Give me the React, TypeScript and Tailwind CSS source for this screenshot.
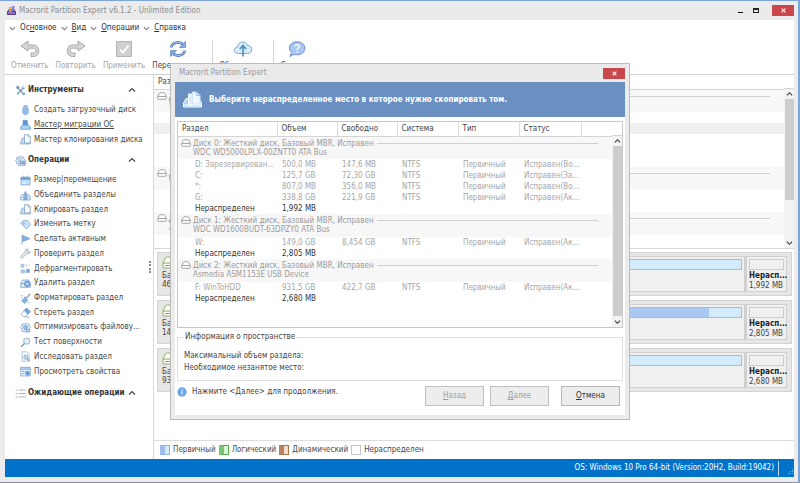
import { ReactNode } from "react";

type Volume = { name: string; size: string; free: string; fs: string; type: string; status: string };
type Disk = { title: string; model: string; capacity: string; volumes: Volume[]; unallocated: string; used: number };

const disks: Disk[] = [
  {
    title: "Диск 0: Жесткий диск, Базовый MBR, Исправен",
    model: "WDC WD5000LPLX-00ZNTT0 ATA Bus",
    capacity: "465,8 GB",
    volumes: [
      { name: "D: Зарезервирован...", size: "500,0 MB", free: "147,6 MB", fs: "NTFS", type: "Первичный", status: "Исправен(Во..." },
      { name: "C:", size: "125,7 GB", free: "72,30 GB", fs: "NTFS", type: "Первичный", status: "Исправен(За..." },
      { name: "*:", size: "807,0 MB", free: "356,0 MB", fs: "NTFS", type: "Первичный", status: "Исправен(Во..." },
      { name: "G:", size: "338,8 GB", free: "221,9 GB", fs: "NTFS", type: "Первичный", status: "Исправен(Ак..." },
    ],
    unallocated: "1,992 MB",
    used: 0,
  },
  {
    title: "Диск 1: Жесткий диск, Базовый MBR, Исправен",
    model: "WDC WD1600BUDT-63DPZY0 ATA Bus",
    capacity: "149,0 GB",
    volumes: [{ name: "W:", size: "149,0 GB", free: "8,454 GB", fs: "NTFS", type: "Первичный", status: "Исправен(Ак..." }],
    unallocated: "2,805 MB",
    used: 94,
  },
  {
    title: "Диск 2: Жесткий диск, Базовый MBR, Исправен",
    model: "Asmedia ASM1153E USB Device",
    capacity: "931,5 GB",
    volumes: [{ name: "F: WinToHDD", size: "931,5 GB", free: "422,7 GB", fs: "NTFS", type: "Первичный", status: "Исправен(Ак..." }],
    unallocated: "2,680 MB",
    used: 55,
  },
];

const columns = ["Раздел", "Объем", "Свободно", "Система", "Тип", "Статус"];

// Sidebar glyphs, all on a 16x16 grid
const glyphs: Record<string, ReactNode> = {
  tools: (
    <>
      <path d="M3 13.5 12.5 4" strokeWidth="2.2" stroke="#6fa6dc" />
      <path d="m4 4 9 9.5" strokeWidth="2" stroke="#8a97a8" />
      <path d="M1.5 3.5 4 1.2l2.3 2.6L3.8 6z" fill="#8a97a8" />
      <path d="M14.8 3.4a3 3 0 0 1-4 1.8M12.5 1a3 3 0 0 0-1.9 4" />
      <path d="m11.5 14.5 3-2.6" strokeWidth="2.4" stroke="#6fa6dc" />
    </>
  ),
  gear: (
    <>
      <path d="M8 1.5 9.5 3h2.8l.5 2.6L15 7.5V15H5v-2l-3-.6.2-2.6L.8 8l1.6-2L2.6 3.2h2.8z" fill="#dcecfa" />
      <path d="M5 9h9M5 12h9M8 7v7" />
      <circle cx="7" cy="7" r="2" fill="#fff" />
      <path d="M10 10h4v3h-4z" fill="#76b2ec" />
    </>
  ),
  usb: (
    <>
      <path d="M5.5 1h5v4h-5z" fill="#a9c8ec" />
      <path d="M4 5h8v5.5c0 2-1.5 3.5-4 3.5s-4-1.5-4-3.5z" fill="#8fbdf0" stroke="#91aede" />
      <path d="M8 14v1.5" />
    </>
  ),
  migrate: (
    <>
      <path d="M4.5 2h6v7h-6z" fill="#5f96d2" stroke="#5f96d2" />
      <path d="M11 4v5" />
      <path d="M.8 12.5 3 9h10l2.2 3.5V15H.8z" fill="#a5d2f7" stroke="#6f9dcb" />
    </>
  ),
  clone: (
    <>
      <path d="m1 12 2-6h4v6h8v2.500H1z" fill="#bfe0fa" />
      <path d="M6.500 1h5.500l3 3v9H6.500z" fill="#f4faff" />
      <path d="M12 1v3h3" />
    </>
  ),
  resize: (
    <>
      <path d="M1.5 3.5h13v11h-13z" fill="#bfe0fa" />
      <path d="M1.5 3.5h13v3h-13z" fill="#6fa8df" />
      <path d="m4 1 2.5 2L4 5M12 1 9.5 3 12 5" />
      <path d="M3 12h6" stroke="#fff" />
    </>
  ),
  merge: (
    <>
      <path d="m1 9 2-2h10l2 2v5.5H1z" fill="#dceefb" />
      <path d="M6 14V6l2-4 2 4v8z" fill="#7fb4e8" />
      <path d="M3 11h3M10 11h3" />
    </>
  ),
  label: (
    <>
      <path d="M1 6 5 2h5.500L15.500 8l-6 6.500z" fill="#c5e4fc" />
      <circle cx="5.2" cy="6" r="1.1" fill="#fff" />
    </>
  ),
  flag: (
    <>
      <path d="M3 1v14.5" stroke="#7f8fa3" />
      <path d="m4 2 10.5 4.8L4 11z" fill="#7cb3ec" />
    </>
  ),
  wrench: <path d="M14.5 4.5 12 6.5 9.8 4.5 12 1.8C9 .8 6.800 3.200 7.500 6L1.500 12c-1.300 1.700.8 3.500 2.200 2.200L9.800 8.300c3 1 5.600-1.200 4.700-3.800z" fill="#e9f1f9" stroke="#8798ad" />,
  defrag: (
    <>
      <path d="M1.500 2h4v4h-4zM1.500 10h5v4.500h-5z" fill="#a5cdf3" stroke="#9fb8d3" />
      <path d="M9 9h5v5H9z" fill="#6fa8df" stroke="#9fb8d3" />
      <path d="M8 5.500 14 2M8 2h2" strokeDasharray="1.5 1.5" />
    </>
  ),
  remove: (
    <>
      <path d="m1 9 2.500-6h9.500l2.200 6v4.500H1z" fill="#dceefb" />
      <path d="M1 8h8" />
      <circle cx="10.5" cy="8.5" r="4.3" fill="#6ea8ea" />
      <path d="M8.500 8.500h4" stroke="#fff" strokeWidth="1.5" />
    </>
  ),
  format: (
    <>
      <path d="M15 1 9.500 7" strokeWidth="1.8" stroke="#8898ac" />
      <path d="m7 5.500 4 4c-.5 3-2.500 5-5 5.500L2 11c2-.5 4-2.500 5-5.500z" fill="#80b6ee" />
      <path d="M1 4h3M2 7h2M11.500 14h2.500" />
    </>
  ),
  erase: (
    <>
      <path d="M9.500 1.500 15 7l-7 7H5L1.500 10.500z" fill="#fff" />
      <path d="M9.500 1.500 15 7l-3.500 3.500L6 5z" fill="#6ea8ea" />
      <path d="M8 14.500h6" />
    </>
  ),
  optimize: (
    <>
      <path d="M8 1.500 9.500 3h3.500l.5 3 1.500 2-1.500 2-.5 3.500H9.500L8 15l-2-1.500H3L2.500 10 1 8l1.500-2L3 3h3.500z" fill="#e6f1fb" />
      <circle cx="8" cy="8" r="3" fill="#8bc0f2" />
      <path d="M9 11h5.500v3.500H9z" fill="#b8dcfa" />
    </>
  ),
  search: (
    <>
      <circle cx="9.8" cy="6" r="4.5" fill="#e2f1fd" />
      <path d="M6.500 9.500 1.500 14.500" strokeWidth="2" />
    </>
  ),
  explore: (
    <>
      <path d="M3 1h7l3.500 3.500V15H3z" fill="#f3f7fb" stroke="#aab7c6" />
      <circle cx="8.5" cy="9" r="3" fill="#b8dcfa" />
      <path d="m10.500 11.300 3.500 3.500" strokeWidth="1.8" stroke="#6fa6dc" />
    </>
  ),
  props: (
    <>
      <path d="M1 2h14v12.500H1z" fill="#e8f3fd" />
      <path d="M1 2h14v3H1z" fill="#a9d0f3" stroke="#8fb4d9" />
      <circle cx="11" cy="10.5" r="3" fill="#5f9fe4" />
      <path d="M3 8h4M3 11h3" />
    </>
  ),
  pending: (
    <>
      <path d="M6 3h9.500M6 8h9.500M6 13h9.500" stroke="#9b9b9b" />
      <path d="m1 3 1.200 1L4 1.800M1 8l1.200 1L4 6.800M1 13l1.200 1L4 11.800" stroke="#9b9b9b" />
    </>
  ),
};

function Glyph({ name }: { name: string }) {
  return (
    <svg className="h-[11px] w-[11px] shrink-0" viewBox="0 0 16 16" fill="none" stroke="#7f9dc0" strokeWidth="1.1" aria-hidden="true">
      {glyphs[name]}
    </svg>
  );
}

function Chevron({ className, up }: { className: string; up?: boolean }) {
  return (
    <svg className={className} viewBox="0 0 8 8" fill="none" stroke="currentColor" strokeWidth="1.2" aria-hidden="true">
      <path d={up ? "m1 5.500 3-3 3 3" : "m1 2.500 3 3 3-3"} />
    </svg>
  );
}

function DriveIcon() {
  return (
    <svg className="h-[8px] w-[10px] shrink-0" viewBox="0 0 20 16" fill="#fff" stroke="#8f8f8f" strokeWidth="1.6" aria-hidden="true">
      <path d="M1.500 9 4.500 2.500Q5 1.500 6 1.500h8q1 0 1.500 1L18.500 9v4q0 1.500-1.500 1.500H3q-1.500 0-1.500-1.500z" />
      <path d="M1.500 9h17" />
    </svg>
  );
}

const tools = [
  { icon: "usb", label: "Создать загрузочный диск" },
  { icon: "migrate", label: "Мастер миграции ОС", active: true },
  { icon: "clone", label: "Мастер клонирования диска" },
];

const operations = [
  { icon: "resize", label: "Размер|перемещение" },
  { icon: "merge", label: "Объединить разделы" },
  { icon: "clone", label: "Копировать раздел" },
  { icon: "label", label: "Изменить метку" },
  { icon: "flag", label: "Сделать активным" },
  { icon: "wrench", label: "Проверить раздел" },
  { icon: "defrag", label: "Дефрагментировать" },
  { icon: "remove", label: "Удалить раздел" },
  { icon: "format", label: "Форматировать раздел" },
  { icon: "erase", label: "Стереть раздел" },
  { icon: "optimize", label: "Оптимизировать файлову..." },
  { icon: "search", label: "Тест поверхности" },
  { icon: "explore", label: "Исследовать раздел" },
  { icon: "props", label: "Просмотреть свойства" },
];

function SectionHeader({ icon, label }: { icon: string; label: string }) {
  return (
    <button className="flex h-5 w-full items-center gap-[2px] pl-[10px] pr-[12px] font-bold text-[#333]">
      <Glyph name={icon} />
      <span className="flex-1 whitespace-nowrap text-left">{label}</span>
      <Chevron className="h-[8px] w-[8px] shrink-0 text-[#444]" up />
    </button>
  );
}

function SidebarItem({ icon, label, active }: { icon: string; label: string; active?: boolean }) {
  return (
    <li className="flex items-center">
      <button className="flex items-center gap-[3px] whitespace-nowrap pl-[15px]">
        <Glyph name={icon} />
        <span className={active ? "underline underline-offset-1" : ""}>{label}</span>
      </button>
    </li>
  );
}

function Scrollbar({ thumb }: { thumb: string }) {
  return (
    <div className="flex w-[10px] flex-1 flex-col items-center bg-[#f3f3f3] text-[#333]">
      <Chevron className="h-[10px] w-[7px]" up />
      <div className={`w-[9px] bg-[#cdcdcd] ${thumb}`} />
      <Chevron className="mt-auto h-[10px] w-[7px]" />
    </div>
  );
}

function VolumeTable({ dim, selected }: { dim?: boolean; selected?: number }) {
  return (
    <table className="min-w-0 flex-1 table-fixed border-collapse self-start text-left">
      <colgroup>
        <col className="w-[99px]" />
        <col className="w-[60px]" />
        <col className="w-[60px]" />
        <col className="w-[61px]" />
        <col className="w-[61px]" />
        <col className="w-[62px]" />
        <col />
      </colgroup>
      <thead>
        <tr className="h-[14px] border-b border-[#d5d5d5] bg-white">
          {columns.map(c => (
            <th key={c} className="border-r border-[#dcdcdc] p-0 pl-1 font-normal leading-[12px] text-[#444]">{c}</th>
          ))}
          <th className="p-0" />
        </tr>
      </thead>
      {disks.map((disk, d) => (
        <tbody key={disk.model}>
          <tr className="h-[23px] bg-[#f7f7f7]">
            <td colSpan={7} className="p-0 pl-[3px] align-top">
              <div className={dim ? "flex gap-[2px] pt-[2px] text-[#9b9b9b]" : "flex gap-[2px] pt-[2px] font-bold text-[#444]"}>
                <DriveIcon />
                <div className="w-[182px] whitespace-nowrap leading-[9px]">
                  <div>{disk.title}</div>
                  <div className={dim ? "" : "font-normal text-[#888]"}>{disk.model}</div>
                </div>
                <div className="mr-[14px] mt-1 h-px flex-1 bg-[#d0d0d0]" />
              </div>
            </td>
          </tr>
          {disk.volumes.map((v, i) => (
            <tr
              key={v.name}
              className={`h-[11px] leading-[11px] ${dim ? "text-[#a6a6a6]" : "text-[#555]"} ${d === 0 && i === selected ? "bg-[#efefef]" : ""}`}
            >
              <td className="whitespace-nowrap p-0 pl-[17px]">{v.name}</td>
              <td className="p-0 pl-[5px]">{v.size}</td>
              <td className="p-0 pl-[5px]">{v.free}</td>
              <td className="p-0 pl-[5px]">{v.fs}</td>
              <td className="p-0 pl-[5px]">{v.type}</td>
              <td className="whitespace-nowrap p-0 pl-[5px]">{v.status}</td>
              <td className="p-0" />
            </tr>
          ))}
          <tr className="h-[11px] leading-[11px] text-[#333]">
            <td className="p-0 pl-[17px]">Нераспределен</td>
            <td className="p-0 pl-[5px]">{disk.unallocated}</td>
            <td colSpan={5} className="p-0" />
          </tr>
        </tbody>
      ))}
    </table>
  );
}

function CloseButton() {
  return (
    <button className="flex h-[11px] w-[22px] items-center justify-center bg-[#c9484c]" aria-label="Закрыть">
      <svg className="h-[5px] w-[5px]" viewBox="0 0 6 6" stroke="#fff" strokeWidth="1.3" aria-hidden="true">
        <path d="m.7.7 4.600 4.600M5.300.7.7 5.300" />
      </svg>
    </button>
  );
}

function MenuItem({ before = "", hot, after }: { before?: string; hot: string; after: string }) {
  return (
    <button className="flex items-center gap-1">
      <Chevron className="h-[7px] w-[7px] text-[#777]" />
      <span>{before}<u>{hot}</u>{after}</span>
    </button>
  );
}

function ToolButton({ label, disabled, children }: { label: string; disabled?: boolean; children: ReactNode }) {
  return (
    <button
      disabled={disabled}
      className={`flex flex-col items-center gap-[3px] whitespace-nowrap ${disabled ? "text-[#a5a5a5]" : "text-[#444]"}`}
    >
      <svg className="h-[18px] w-[20px]" viewBox="0 0 20 18" fill="none" aria-hidden="true">{children}</svg>
      <span className="leading-[10px]">{label}</span>
    </button>
  );
}

function DiskCard({ disk }: { disk: Disk }) {
  return (
    <div className="flex h-[44px] border border-[#d4d4d4] bg-[#e6e6e6] p-[3px]">
      <div className="w-[50px] pl-[1px] leading-[9px] text-[#444]">
        <svg className="mb-[2px] h-[13px] w-[18px]" viewBox="0 0 18 13" fill="#fff" stroke="#8dac4e" aria-hidden="true">
          <path d="M1 7 3.500 2Q4 1 5.500 1h7q1.500 0 2 1L17 7v4q0 1-1 1H2q-1 0-1-1z" />
          <path d="M1 7h16M3 9.500h12" />
        </svg>
        <div>Базовый</div>
        <div>{disk.capacity}</div>
      </div>
      <div className="flex-1 border border-[#d0d0d0] bg-[#f0f0f0] p-[2px]">
        <div className="h-[11px] border border-[#9fbfdc] bg-[#d3ecfd]">
          <div className="h-full bg-[#a9c9f3]" style={{ width: `${disk.used}%` }} />
        </div>
      </div>
      <div className="mr-[1px] w-[42px] border border-l-2 border-[#d0d0d0] bg-[#f0f0f0] p-[2px] leading-[10px]">
        <div className="mb-[1px] h-[11px] border border-[#ccc]" />
        <div className="whitespace-nowrap font-bold text-[#222]">Нерасп...</div>
        <div className="whitespace-nowrap text-[#444]">{disk.unallocated}</div>
      </div>
    </div>
  );
}

function CopyDialog() {
  return (
    <div
      role="dialog"
      aria-label="Macrorit Partition Expert"
      className="w-[460px] border border-[#bdbdbd] bg-[#ebebeb] px-1 pb-1"
    >
      <div className="flex h-[18px] items-center justify-between pl-1 text-[#999]">
        <span>Macrorit Partition Expert</span>
        <CloseButton />
      </div>
      <div className="bg-white">
        <div className="flex h-[35px] items-center gap-[7px] bg-[#6a8fc1] pl-2">
          <svg className="h-[18px] w-[19px]" viewBox="0 0 19 18" fill="none" stroke="#fff" aria-hidden="true">
            <path d="M.5 12 3 7.500h13l2.500 4.500v4H.5z" fill="#a9d5f5" />
            <path d="M5.500 3h4v11h-4z" fill="#dbeffc" />
            <path d="M9.500 1h4L17 4.500V13H9.500z" fill="#eff9ff" stroke="#cfe8fa" />
            <path d="M13.500 1v3.500H17" stroke="#8fc0e8" />
            <path d="M.5 14h18" />
          </svg>
          <h2 className="font-bold text-white">Выберите нераспределенное место в которое нужно скопировать том.</h2>
        </div>

        <div className="px-[2px] pt-1">
          <div className="flex h-[207px] border border-[#c8c8c8]">
            <VolumeTable dim />
            <div className="flex flex-col">
              <div className="h-[14px] border-b border-[#d5d5d5]" />
              <Scrollbar thumb="h-[170px]" />
            </div>
          </div>

          <fieldset className="mt-[3px] h-[50px] border border-[#dedede] px-[6px] text-[#444]">
            <legend className="px-[1px] leading-[12px]">Информация о пространстве</legend>
            <p className="mt-[7px] leading-[12px]">Максимальный объем раздела:</p>
            <p className="leading-[12px]">Необходимое незанятое место:</p>
          </fieldset>

          <div className="flex items-start pb-[9px] pr-[3px] pt-[5px]">
            <svg className="mt-[1px] h-[10px] w-[10px]" viewBox="0 0 10 10" aria-hidden="true">
              <circle cx="5" cy="5" r="4.7" fill="#6ea6ea" />
              <path d="M5 4.300v3.200M5 2.300v1.100" stroke="#fff" strokeWidth="1.1" />
            </svg>
            <p className="flex-1 pl-[5px] leading-[12px] text-[#444]">Нажмите &lt;Далее&gt; для продолжения.</p>
            <div className="flex gap-[6px]">
              <button disabled className="h-5 w-[59px] border border-[#c0c0c0] bg-[#ededed] text-[#a0a0a0]"><u>Н</u>азад</button>
              <button disabled className="h-5 w-[59px] border border-[#c0c0c0] bg-[#ededed] text-[#a0a0a0]"><u>Д</u>алее</button>
              <button className="ml-[6px] h-5 w-[59px] border border-[#b5b5b5] bg-[#ededed] text-[#333]"><u>О</u>тмена</button>
            </div>
          </div>
        </div>
      </div>
    </div>
  );
}

export default function App() {
  return (
    <div className="flex min-h-screen flex-col border-b border-r-2 border-t border-b-[#8b8f9f] border-r-[#7fa5d8] border-t-[#7fa5d8] bg-[#ebebeb] pb-[5px] pl-[5px] pr-1 font-['DejaVu_Sans_Condensed','DejaVu_Sans',sans-serif] text-[8px] leading-[12px] text-[#484848]">
      <header className="flex h-[19px] items-center text-[#8c8c8c]">
        <svg className="ml-[2px] h-[9px] w-[9px]" viewBox="0 0 9 9" aria-hidden="true">
          <path d="M0 5.500 2 3h5l2 2.500V9H0z" fill="#5b3d8c" />
          <path d="M2 1h2.500v5H2z" fill="#e8a33c" />
          <path d="M5 0h2.500v5H5z" fill="#8f7fd0" />
          <path d="M1 7h7" stroke="#b9a8de" />
        </svg>
        <h1 className="flex-1 pl-[3px]">Macrorit Partition Expert v6.1.2 - Unlimited Edition</h1>
        <button className="flex h-[11px] w-4 items-end justify-center pb-[3px]" aria-label="Свернуть">
          <span className="h-[1px] w-[5px] bg-black" />
        </button>
        <button className="mr-2 flex h-[11px] w-4 items-center justify-center" aria-label="Развернуть">
          <span className="h-[5px] w-[6px] border border-t-2 border-[#222]" />
        </button>
        <CloseButton />
      </header>

      <nav className="flex h-[16px] items-center gap-1 bg-white pl-[4px] text-[#333]">
        <MenuItem before="Ос" hot="н" after="овное" />
        <MenuItem hot="В" after="ид" />
        <MenuItem hot="О" after="перации" />
        <MenuItem hot="С" after="правка" />
      </nav>

      <div className="flex h-[39px] items-start gap-[7px] border-b border-[#d0d0d0] bg-white pl-[6px] pt-[4px]">
        <ToolButton label="Отменить" disabled>
          <path d="M8 1 1 6l7 5V8.200h5.500c3 0 3 4.800 0 4.800H11v3.500h2.500c7 0 7-11.500 0-11.500H8z" fill="#d6d6d6" stroke="#a8a8a8" />
        </ToolButton>
        <ToolButton label="Повторить" disabled>
          <path d="m12 1 7 5-7 5V8.200H6.500c-3 0-3 4.800 0 4.800H9v3.500H6.500c-7 0-7-11.500 0-11.500H12z" fill="#d6d6d6" stroke="#a8a8a8" />
        </ToolButton>
        <ToolButton label="Применить" disabled>
          <path d="M2.500 1.500h15v15h-15z" fill="#d0d0d0" stroke="#b5b5b5" />
          <path d="m6 9.500 3 3 5.500-7" stroke="#fff" strokeWidth="2" />
        </ToolButton>
        <ToolButton label="Перезагрузка">
          <path d="M3 7.500C4.500 2 12 .8 15.500 5M17 10.500C15.500 16 8 17.200 4.500 13" stroke="#5a80bd" strokeWidth="2.8" />
          <path d="M3 7.500C4.500 2 12 .8 15.500 5M17 10.500C15.500 16 8 17.200 4.500 13" stroke="#a9c9ef" />
          <path d="M17.500 1.500v6h-6zM2.500 16.500v-6h6z" fill="#88abe0" stroke="#5a80bd" strokeWidth=".7" />
        </ToolButton>
        <div className="h-[36px] w-px bg-[#d5d5d5]" />
        <ToolButton label="Обновление">
          <path d="M5.500 13.500C0 13.500 0 7.500 4.500 7 5 1 13 0 14.500 5.500c5.500 0 6 8 0 8z" fill="#d5ecfb" stroke="#7ea5cf" />
          <path d="M10 16.500V6M6.800 9 10 5.500 13.200 9" stroke="#4c8cba" strokeWidth="1.6" />
        </ToolButton>
        <div className="h-[36px] w-px bg-[#d5d5d5]" />
        <ToolButton label="Справка">
          <path d="M4.500 12.500C-.5 7 4 1.800 10 1.800c10.500 0 10.500 13 0 13-1.200 0-2-.1-3-.5L3 16.500z" fill="#a9c6f3" stroke="#6f8fc9" />
          <path d="M8 6.500c0-2.600 4.200-2.600 4.200 0C12.200 8.300 10 8.300 10 10M10 11.200v1.500" stroke="#fff" strokeWidth="1.3" />
        </ToolButton>
      </div>

      <div className="flex flex-1 bg-white">
        <aside className="w-[143px] shrink-0 pt-[5px]">
          <SectionHeader icon="tools" label="Инструменты" />
          <ul className="mt-[3px] grid h-[44px] auto-rows-fr">
            {tools.map(t => <SidebarItem key={t.label} {...t} />)}
          </ul>
          <div className="mt-[3px]">
            <SectionHeader icon="gear" label="Операции" />
          </div>
          <ul className="mt-[3px] grid h-[206px] auto-rows-fr">
            {operations.map(o => <SidebarItem key={o.label} {...o} />)}
          </ul>
          <div className="mt-[4px]">
            <SectionHeader icon="pending" label="Ожидающие операции" />
          </div>
        </aside>
        <div className="mr-[2px] w-[3px] self-center border-r-2 border-dotted border-[#888] py-[6px]" />

        <main className="flex min-w-0 flex-1 flex-col border-l border-[#d8d8d8]">
          <div className="flex h-[174px] border-b border-[#d8d8d8]">
            <VolumeTable selected={1} />
            <div className="flex flex-col">
              <div className="h-[14px] border-b border-[#d5d5d5]" />
              <Scrollbar thumb="h-[101px]" />
            </div>
          </div>
          <div className="flex flex-1 flex-col gap-1 py-[3px] pl-[3px] pr-[2px]">
            {disks.map(d => <DiskCard key={d.model} disk={d} />)}
          </div>
          <div className="flex h-[19px] items-center gap-[3px] border-t border-[#ddd] pl-[6px]">
            <span className="flex items-center gap-[3px]">
              <i className="h-[10px] w-[10px] border border-l-[5px] border-[#8eb2e0] border-l-[#9dbdea] bg-[#d3ecfd]" />
              Первичный
            </span>
            <span className="flex items-center gap-[3px]">
              <i className="h-[10px] w-[10px] border border-l-[5px] border-[#5bab55] border-l-[#7cc275] bg-[#d9f5d6]" />
              Логический
            </span>
            <span className="flex items-center gap-[3px]">
              <i className="h-[10px] w-[10px] border border-l-[5px] border-[#a9704b] border-l-[#b98261] bg-[#f4dccb]" />
              Динамический
            </span>
            <span className="flex items-center gap-[3px]">
              <i className="h-[10px] w-[10px] border border-[#c4c4c4] bg-white" />
              Нераспределен
            </span>
          </div>
        </main>
      </div>

      <footer className="flex h-[18px] items-center justify-end bg-[#0072c9] text-white">
        <span>OS: Windows 10 Pro 64-bit (Version:20H2, Build:19042)</span>
        <div className="ml-1 h-[15px] w-px bg-[#bcdcf5]" />
        <svg className="ml-[9px] mr-[1px] mt-[7px] h-[5px] w-[5px]" viewBox="0 0 5 5" fill="#8cc0ea" aria-hidden="true">
          <path d="M4 0h1v1H4zM2 2h1v1H2zM4 2h1v1H4zM0 4h1v1H0zM2 4h1v1H2zM4 4h1v1H4z" />
        </svg>
      </footer>

      <div className="fixed inset-0 flex items-center justify-center">
        <CopyDialog />
      </div>
    </div>
  );
}
